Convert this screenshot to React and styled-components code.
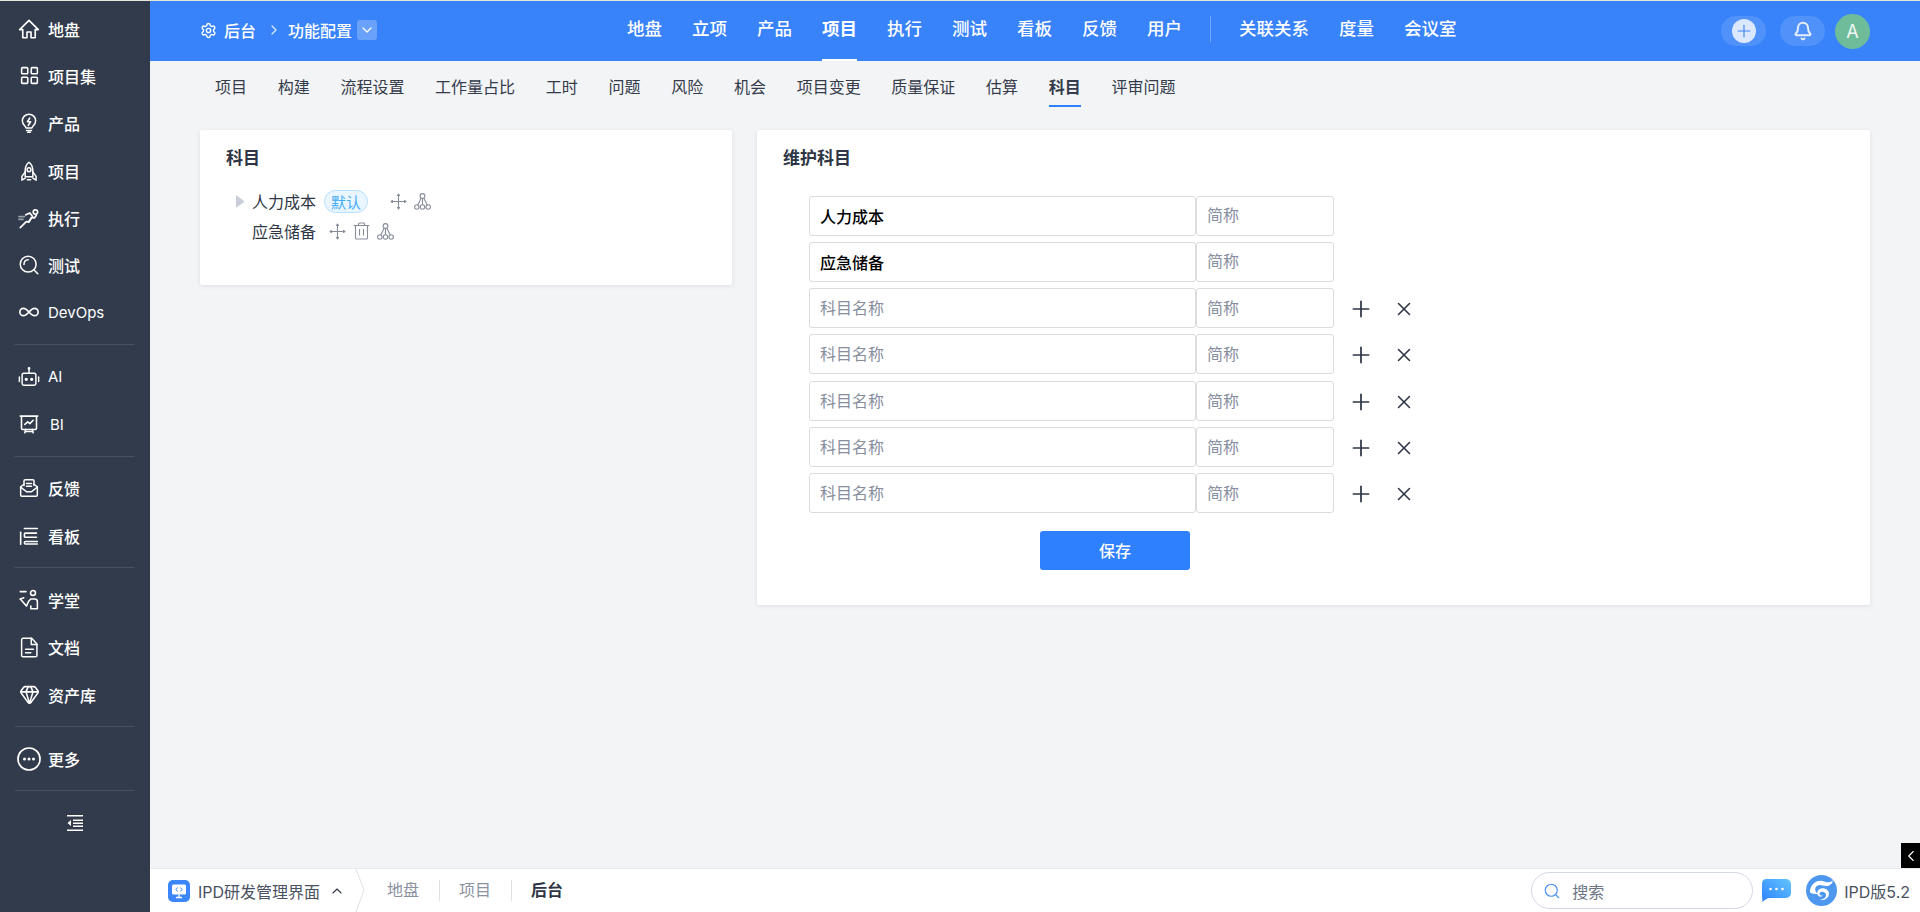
import React from "react";
import styled, { createGlobalStyle } from "styled-components";
import { Plus, X, Bell, Search, Settings, ChevronRight, ChevronDown, ChevronUp, ChevronLeft, LayoutGrid, Infinity as InfinityIcon, Gem } from "lucide-react";

const FONT = `Inter, "Noto Sans CJK SC", sans-serif`;

const GlobalStyle = createGlobalStyle`
  html, body { margin: 0; padding: 0; height: 100%; }
  body { font-family: ${FONT}; background: #f3f4f6; overflow: hidden; }
  * { box-sizing: border-box; }
`;

const Page = styled.div`
  position: relative;
  display: flex;
  height: 912px;
  width: 1920px;
  border-top: 1px solid #e6e6da;
`;

/* ---------- sidebar ---------- */
const Sidebar = styled.aside`
  width: 150px;
  flex: none;
  background: #313b4c;
  padding-top: 4px;
  display: flex;
  flex-direction: column;
`;
const SideItem = styled.div`
  height: 47.3px;
  flex: none;
  display: flex;
  align-items: center;
  padding-left: ${(p) => p.$pad || 19}px;
  gap: ${(p) => p.$gap || 9}px;
  color: #fff;
  font-size: 16px;
  font-weight: 500;
  svg { flex: none; }
`;
const SideLatin = styled.span`
  font-size: 15px;
  font-weight: 400;
`;
const SideDivider = styled.div`
  height: 1px;
  flex: none;
  margin: 8px 15px;
  background: #49515f;
`;
const Collapse = styled.div`
  height: 47.3px;
  flex: none;
  display: flex;
  align-items: center;
  justify-content: center;
  color: #fff;
`;

const Line = ({ size = 20, children, fill = "none", width = 1.8 }) => (
  <svg width={size} height={size} viewBox="0 0 24 24" fill={fill} stroke="currentColor" strokeWidth={width} strokeLinecap="round" strokeLinejoin="round">
    {children}
  </svg>
);

const HomeIcon = () => (
  <Line size={22}><path d="M12 2.5 1.8 12.6h3.4V21.5h4.6v-6.2h4.4v6.2h4.6V12.6h3.4z" /></Line>
);
const BulbIcon = () => (
  <Line><path d="M8.5 18c0-2-4.5-3.6-4.5-8.6a8 8 0 0 1 16 0c0 5-4.5 6.6-4.5 8.6z" /><path d="M13 6l-3 4.5h4L11 15" /><path d="M9 21h6M10.5 23.2h3" /></Line>
);
const RocketIcon = () => (
  <Line>
    <path d="M12 1.5c3.2 2.6 4.6 6 4.6 10V19H7.4v-7.5C7.4 7.5 8.8 4.1 12 1.5z" />
    <path d="M7.4 13 3.5 18.5V23l3.9-2.5M16.6 13l3.9 5.5V23l-3.9-2.5" />
    <circle cx="12" cy="10.5" r="2.3" />
    <path d="M10 22.5h4" />
  </Line>
);
const RunnerIcon = () => (
  <Line size={22}>
    <circle cx="19" cy="5.5" r="2.4" />
    <path d="M2.5 22.5 9 16l3 .5 2.5-5 3.5.5 2-3" />
    <path d="M8.5 8.5 13 6.5l3 4-4 5" />
    <path d="M1 10.5h6M1 13.5h4.500" opacity="0.5" />
  </Line>
);
const TestIcon = () => (
  <Line>
    <circle cx="11" cy="11" r="9.5" />
    <path d="M17.8 17.8 22.5 22.5M6 11.5c0-3 2-5.500 5-5.700" />
  </Line>
);
const BotIcon = () => (
  <Line size={22} width={1.6}>
    <rect x="4.5" y="8" width="15" height="13" rx="1.8" />
    <path d="M12 8V3.5M1.5 12v5M22.500 12v5" />
    <circle cx="12" cy="2.7" r="0.7" fill="currentColor" />
    <circle cx="9" cy="14.5" r="1" fill="currentColor" />
    <circle cx="15" cy="14.5" r="1" fill="currentColor" />
  </Line>
);
const BoardIcon = () => (
  <Line width={1.9}>
    <path d="M1.5 2.5h21M3 2.5V17a1.5 1.5 0 0 0 1.5 1.500h15A1.500 1.500 0 0 0 21 17V2.500" />
    <path d="M7 12.500l3.500-3 2.500 2 4-4M8 18.500l-1 4M16 18.500l1 4M7.500 21h9" />
  </Line>
);
const FeedbackIcon = () => (
  <Line>
    <path d="M6 9V3.500A1.500 1.500 0 0 1 7.500 2h9A1.500 1.500 0 0 1 18 3.500V9" />
    <path d="M9 6.500h6M9 10h6" />
    <path d="M6 7.500 2 10.500v10A1.500 1.500 0 0 0 3.500 22h17a1.500 1.500 0 0 0 1.500-1.500v-10l-4-3" />
    <path d="M2 11l7 5.500h6L22 11" />
  </Line>
);
const KanbanIcon = () => (
  <Line width={1.9}>
    <path d="M22 3H6.500" />
    <path d="M21 8.500H7.500a1 1 0 0 0-1 1v3a1 1 0 0 0 1 1H21" />
    <path d="M22 18.500H7.500a1 1 0 0 0-1 1v1a1 1 0 0 0 1 1H22" />
    <path d="M2 7.500V22" />
  </Line>
);
const StudyIcon = () => (
  <Line size={21} width={1.8}>
    <circle cx="16" cy="4.500" r="2.800" />
    <path d="M1.500 3h6.500M1.500 11.500l7 8 2.500-5.500 2.500-2.500h4.500a3 3 0 0 1 3 3V22.500h-7.500v-3" />
    <path d="M5.500 10 1.500 11.500" />
  </Line>
);
const DocIcon = () => (
  <Line size={21} width={1.7}>
    <path d="M4.500 1.500h10l6 6.500v13a1.500 1.500 0 0 1-1.500 1.500H4.500A1.500 1.500 0 0 1 3 21V3a1.500 1.500 0 0 1 1.500-1.500z" />
    <path d="M14 1.500V8.500h6.500M7.500 14h9M7.500 18h6" />
  </Line>
);
const MoreIcon = () => (
  <svg width="24" height="24" viewBox="0 0 24 24" fill="none" stroke="currentColor" strokeWidth="1.7">
    <circle cx="12" cy="12" r="11" />
    <circle cx="7.5" cy="12" r="1.5" fill="currentColor" stroke="none" />
    <circle cx="12" cy="12" r="1.5" fill="currentColor" stroke="none" />
    <circle cx="16.5" cy="12" r="1.5" fill="currentColor" stroke="none" />
  </svg>
);
const OutdentIcon = () => (
  <svg width="16" height="16" viewBox="0 0 16 16" fill="currentColor">
    <path d="M0 0h16v1.500H0zM6 4.500h10V6H6zM6 7.500h10V9H6zM6 10.500h10V12H6zM0 14.500h16V16H0zM4 5v6L0.500 8z" />
  </svg>
);

const sideGroups = [
  [
    ["地盘", <HomeIcon />, { $pad: 18, $gap: 8 }],
    ["项目集", <LayoutGrid size={21} strokeWidth={1.8} />, { $gap: 8 }],
    ["产品", <BulbIcon />],
    ["项目", <RocketIcon />],
    ["执行", <RunnerIcon />, { $pad: 18, $gap: 8 }],
    ["测试", <TestIcon />],
    ["DevOps", <InfinityIcon size={22} strokeWidth={1.8} />, { $pad: 18, $gap: 8, latin: true }],
  ],
  [
    ["AI", <BotIcon />, { $pad: 18, $gap: 8, latin: true }],
    ["BI", <BoardIcon />, { $gap: 11, latin: true }],
  ],
  [
    ["反馈", <FeedbackIcon />],
    ["看板", <KanbanIcon />],
  ],
  [
    ["学堂", <StudyIcon />, { $pad: 19, $gap: 8 }],
    ["文档", <DocIcon />, { $pad: 19, $gap: 8 }],
    ["资产库", <Gem size={21} strokeWidth={1.8} />, { $pad: 19, $gap: 8 }],
  ],
  [["更多", <MoreIcon />, { $pad: 17, $gap: 7 }]],
];

/* ---------- top bar ---------- */
const Main = styled.div`
  flex: 1;
  min-width: 0;
  display: flex;
  flex-direction: column;
`;
const TopBar = styled.header`
  height: 60px;
  flex: none;
  background: #3883fa;
  color: #fff;
  display: flex;
  align-items: stretch;
  padding-right: 50px;
`;
const Crumbs = styled.div`
  width: 477px;
  flex: none;
  display: flex;
  align-items: center;
  padding: 0 0 2px 50px;
  font-size: 16px;
  font-weight: 500;
  color: #fff;
`;
const CrumbText = styled.span`
  margin-left: ${(p) => p.$ml || 0}px;
`;
const CrumbArrow = styled.span`
  display: flex;
  margin: 0 6px 0 10px;
  opacity: 0.8;
`;
const DropBox = styled.span`
  width: 20px;
  height: 20px;
  margin-left: 5px;
  border-radius: 3px;
  background: rgba(255, 255, 255, 0.25);
  display: flex;
  align-items: center;
  justify-content: center;
`;
const TopNav = styled.nav`
  display: flex;
  align-items: stretch;
  gap: 30px;
`;
const TopLink = styled.a`
  height: 60px;
  display: flex;
  align-items: center;
  padding-bottom: 6px;
  font-size: 17.5px;
  font-weight: ${(p) => (p.$active ? 700 : 500)};
  color: #fff;
  border-bottom: 2px solid ${(p) => (p.$active ? "#fff" : "transparent")};
`;
const TopDivider = styled.span`
  width: 1px;
  height: 26px;
  align-self: center;
  margin: 0 -2px 4px -2px;
  background: rgba(255, 255, 255, 0.3);
`;
const TopActions = styled.div`
  margin-left: auto;
  display: flex;
  align-items: center;
  gap: 10px;
`;
const Pill = styled.span`
  width: 45px;
  height: 30px;
  border-radius: 15px;
  background: rgba(255, 255, 255, 0.12);
  margin-right: ${(p) => p.$mr || 0}px;
  display: flex;
  align-items: center;
  justify-content: center;
  color: #e6eeff;
`;
const PlusDot = styled.span`
  width: 24px;
  height: 24px;
  border-radius: 50%;
  background: #dce8ff;
  color: #3883fa;
  display: flex;
  align-items: center;
  justify-content: center;
`;
const Avatar = styled.span`
  width: 35px;
  height: 35px;
  border-radius: 50%;
  background: #6fbc9a;
  color: #f1f7f4;
  font-size: 18px;
  display: flex;
  align-items: center;
  justify-content: center;
`;

/* ---------- sub nav ---------- */
const SubNav = styled.nav`
  height: 54px;
  flex: none;
  display: flex;
  align-items: flex-start;
  gap: 30.7px;
  padding: 8px 0 0 65px;
`;
const SubLink = styled.a`
  height: 38px;
  display: flex;
  align-items: center;
  padding-bottom: 2px;
  font-size: 16px;
  color: #343b4a;
  font-weight: ${(p) => (p.$active ? 700 : 400)};
  border-bottom: 2px solid ${(p) => (p.$active ? "#2f80ff" : "transparent")};
`;

/* ---------- cards ---------- */
const Content = styled.main`
  flex: 1;
  min-height: 0;
  display: flex;
  align-items: flex-start;
  gap: 25px;
  padding: 15px 50px 0;
`;
const Card = styled.section`
  background: #fff;
  border-radius: 2px;
  box-shadow: 0 1px 4px rgba(30, 40, 60, 0.1);
  padding: 16px ${(p) => p.$pr || 26}px ${(p) => p.$pb}px;
  width: ${(p) => p.$w || "auto"};
  flex: ${(p) => (p.$w ? "none" : 1)};
`;
const CardTitle = styled.h2`
  margin: 0;
  font-size: 17px;
  line-height: 24px;
  font-weight: 700;
  color: #2e3645;
`;
const Tree = styled.div`
  margin: 16px 0 0 10px;
`;
const TreeRow = styled.div`
  height: 30px;
  display: flex;
  align-items: center;
  font-size: 16px;
  color: #2e3645;
`;
const Caret = styled.span`
  width: 8px;
  height: 13px;
  margin-right: 8px;
  flex: none;
  border-style: solid;
  border-width: 6.5px 0 6.5px 8px;
  border-color: transparent transparent transparent #c8cdd9;
  visibility: ${(p) => (p.$hidden ? "hidden" : "visible")};
`;
const Tag = styled.span`
  width: 44px;
  height: 23px;
  margin-left: 8px;
  border-radius: 12px;
  border: 1px solid #b6e0ff;
  background: #e9f6ff;
  color: #45abf6;
  font-size: 15px;
  display: flex;
  align-items: center;
  justify-content: center;
`;
const TreeTools = styled.span`
  display: flex;
  align-items: center;
  gap: 7px;
  margin-left: ${(p) => p.$ml}px;
  color: #878d9b;
`;

const MoveIcon = () => (
  <svg width="17" height="17" viewBox="0 0 17 17" fill="none" stroke="currentColor" strokeWidth="1.1" strokeLinejoin="round">
    <path d="M8.5 1v15M1 8.500h15" />
    <path d="M7.5 2.500 8.500 1 9.500 2.500zM7.500 14.500l1 1.500 1-1.500zM2.500 7.500 1 8.500l1.500 1zM14.500 7.500l1.500 1-1.500 1z" fill="currentColor" />
  </svg>
);
const TrashIcon = () => (
  <svg width="17" height="18" viewBox="0 0 17 18" fill="none" stroke="currentColor" strokeWidth="1.1">
    <path d="M.5 3.500h16M5.500 3.500V2a1 1 0 0 1 1-1h4a1 1 0 0 1 1 1v1.500M2.500 3.500V16a1 1 0 0 0 1 1h10a1 1 0 0 0 1-1V3.500M6.500 7v6.500M10.500 7v6.500" />
  </svg>
);
const NodesIcon = () => (
  <svg width="17" height="17" viewBox="0 0 17 17" fill="none" stroke="currentColor" strokeWidth="1.1">
    <circle cx="8.5" cy="3" r="2.4" />
    <circle cx="2.8" cy="14" r="2.2" />
    <circle cx="8.5" cy="14" r="2.2" />
    <circle cx="14.2" cy="14" r="2.2" />
    <path d="M8.5 5.400v6.400M7.200 5 3.800 12M9.800 5l3.400 7" />
  </svg>
);

/* ---------- form ---------- */
const Rows = styled.div`
  margin: 26px 0 0 26px;
  display: flex;
  flex-direction: column;
  gap: 6.17px;
`;
const Row = styled.div`
  height: 40px;
  display: flex;
  align-items: center;
`;
const Field = styled.input`
  width: ${(p) => p.$w}px;
  height: 40px;
  flex: none;
  border: 1px solid #dcdcdc;
  border-radius: 3px;
  padding: 0 10px ${(p) => p.$lift || 0}px;
  outline: none;
  background: #fff;
  font-family: ${FONT};
  font-size: 16px;
  font-weight: 500;
  color: #000;
  &::placeholder {
    color: #878e9e;
    font-weight: 400;
    opacity: 1;
  }
`;
const RowTool = styled.span`
  width: 26px;
  height: 26px;
  margin-left: ${(p) => p.$ml}px;
  margin-top: 2px;
  display: flex;
  align-items: center;
  justify-content: center;
  color: #2e3645;
`;
const SaveButton = styled.button`
  display: block;
  width: 150px;
  height: 39px;
  margin: 18px 0 0 257px;
  border: none;
  border-radius: 3px;
  background: #2f80ff;
  color: #fff;
  font-family: ${FONT};
  font-size: 16px;
  font-weight: 500;
`;

/* ---------- bottom bar ---------- */
const BottomBar = styled.footer`
  height: 44px;
  flex: none;
  background: #fff;
  border-top: 1px solid #e9eaee;
  display: flex;
  align-items: center;
`;
const AppMark = styled.span`
  width: 22px;
  height: 22px;
  margin-left: 18px;
  border-radius: 5px;
  background: #3b86fb;
  display: flex;
  align-items: center;
  justify-content: center;
`;
const AppName = styled.span`
  margin-left: 8px;
  font-size: 16px;
  color: #4a5161;
`;
const AppToggle = styled.span`
  display: flex;
  margin-left: 9px;
  color: #2e3645;
`;
const BreadArrow = styled.svg`
  margin-left: 10px;
  flex: none;
`;
const BottomTabs = styled.div`
  display: flex;
  align-items: center;
  margin-left: 22px;
`;
const BottomTab = styled.span`
  font-size: 16px;
  padding-right: 19.5px;
  margin-right: 19.5px;
  color: ${(p) => (p.$active ? "#2e3645" : "#8a919f")};
  font-weight: ${(p) => (p.$active ? 700 : 400)};
  border-right: ${(p) => (p.$active ? "none" : "1px solid #dfe1e6")};
  line-height: 21px;
`;
const BottomRight = styled.div`
  margin-left: auto;
  display: flex;
  align-items: center;
  padding-right: 10px;
`;
const SearchBox = styled.div`
  width: 222px;
  height: 37px;
  border: 1px solid #d3d8e6;
  border-radius: 19px;
  display: flex;
  align-items: center;
  padding-left: 11px;
  gap: 11px;
  color: #4a8ff0;
`;
const SearchText = styled.span`
  font-size: 16px;
  color: #6d7686;
`;
const ChatMark = styled.svg`
  margin-left: 8px;
  flex: none;
`;
const BrandMark = styled.svg`
  margin-left: 15px;
  flex: none;
`;
const Version = styled.span`
  margin-left: 7px;
  font-size: 16px;
  color: #4a5161;
`;
const EdgeTab = styled.div`
  position: absolute;
  right: 0;
  top: 842px;
  width: 19px;
  height: 25px;
  background: #000;
  color: #fff;
  display: flex;
  align-items: center;
  justify-content: center;
`;

const topLinks = ["地盘", "立项", "产品", "项目", "执行", "测试", "看板", "反馈", "用户"];
const topExtra = ["关联关系", "度量", "会议室"];
const subLinks = ["项目", "构建", "流程设置", "工作量占比", "工时", "问题", "风险", "机会", "项目变更", "质量保证", "估算", "科目", "评审问题"];

export default function App() {
  return (
    <>
      <GlobalStyle />
      <Page>
        <Sidebar>
          {sideGroups.map((group, i) => (
            <React.Fragment key={i}>
              {i > 0 && <SideDivider />}
              {group.map(([label, icon, opts = {}]) => (
                <SideItem key={label} $pad={opts.$pad} $gap={opts.$gap}>
                  {icon}
                  {opts.latin ? <SideLatin>{label}</SideLatin> : <span>{label}</span>}
                </SideItem>
              ))}
            </React.Fragment>
          ))}
          <SideDivider />
          <Collapse><OutdentIcon /></Collapse>
        </Sidebar>

        <Main>
          <TopBar>
            <Crumbs>
              <Settings size={17} strokeWidth={2} />
              <CrumbText $ml={7}>后台</CrumbText>
              <CrumbArrow><ChevronRight size={16} strokeWidth={2} /></CrumbArrow>
              <CrumbText>功能配置</CrumbText>
              <DropBox><ChevronDown size={16} strokeWidth={1.8} /></DropBox>
            </Crumbs>
            <TopNav>
              {topLinks.map((t) => (
                <TopLink key={t} $active={t === "项目"}>{t}</TopLink>
              ))}
              <TopDivider />
              {topExtra.map((t) => (
                <TopLink key={t}>{t}</TopLink>
              ))}
            </TopNav>
            <TopActions>
              <Pill $mr={4}><PlusDot><Plus size={20} strokeWidth={1.3} /></PlusDot></Pill>
              <Pill><Bell size={20} strokeWidth={2.4} /></Pill>
              <Avatar>A</Avatar>
            </TopActions>
          </TopBar>

          <SubNav>
            {subLinks.map((t) => (
              <SubLink key={t} $active={t === "科目"}>{t}</SubLink>
            ))}
          </SubNav>

          <Content>
            <Card $w="532px" $pb={39}>
              <CardTitle>科目</CardTitle>
              <Tree>
                <TreeRow>
                  <Caret />
                  人力成本
                  <Tag>默认</Tag>
                  <TreeTools $ml={22}><MoveIcon /><NodesIcon /></TreeTools>
                </TreeRow>
                <TreeRow>
                  <Caret $hidden />
                  应急储备
                  <TreeTools $ml={13}><MoveIcon /><TrashIcon /><NodesIcon /></TreeTools>
                </TreeRow>
              </Tree>
            </Card>

            <Card $pb={35}>
              <CardTitle>维护科目</CardTitle>
              <Rows>
                {["人力成本", "应急储备", "", "", "", "", ""].map((name, i) => (
                  <Row key={i}>
                    <Field $w={387} readOnly value={name} placeholder="科目名称" />
                    <Field $w={138} $lift={name ? 3 : 0} readOnly placeholder="简称" />
                    {!name && (
                      <>
                        <RowTool $ml={14}><Plus size={26} strokeWidth={1.6} /></RowTool>
                        <RowTool $ml={17}><X size={22} strokeWidth={1.7} /></RowTool>
                      </>
                    )}
                  </Row>
                ))}
              </Rows>
              <SaveButton>保存</SaveButton>
            </Card>
          </Content>

          <BottomBar>
            <AppMark>
              <svg width="16" height="16" viewBox="0 0 16 16" fill="none">
                <rect x="1" y="1.5" width="14" height="10" rx="1.5" fill="#fff" />
                <path d="M6.5 4.500 5 6.500l1.500 2M9.500 4.500 11 6.500l-1.500 2" stroke="#3b86fb" strokeWidth="1" />
                <path d="M8 11.500V14.500M5 14.500h6" stroke="#fff" strokeWidth="1.3" />
              </svg>
            </AppMark>
            <AppName>IPD研发管理界面</AppName>
            <AppToggle><ChevronUp size={16} strokeWidth={1.6} /></AppToggle>
            <BreadArrow width="10" height="43" viewBox="0 0 10 43" fill="none" stroke="#dfe1e6">
              <path d="M1 0 9 21 1 43" />
            </BreadArrow>
            <BottomTabs>
              <BottomTab>地盘</BottomTab>
              <BottomTab>项目</BottomTab>
              <BottomTab $active>后台</BottomTab>
            </BottomTabs>
            <BottomRight>
              <SearchBox>
                <Search size={18} strokeWidth={1.5} />
                <SearchText>搜索</SearchText>
              </SearchBox>
              <ChatMark width="30" height="24" viewBox="0 0 30 24">
                <defs>
                  <linearGradient id="chatFill" x1="0" y1="1" x2="1" y2="0">
                    <stop offset="0" stopColor="#2f80ff" />
                    <stop offset="1" stopColor="#62c6ff" />
                  </linearGradient>
                </defs>
                <path d="M5 0h20a5 5 0 0 1 5 5v9a5 5 0 0 1-5 5H9c-3 0-5 2-8 4 1-2 0-4 0-6V5a5 5 0 0 1 4-5z" fill="url(#chatFill)" />
                <circle cx="9.5" cy="10" r="1.3" fill="#fff" />
                <circle cx="15.5" cy="10" r="1.3" fill="#fff" />
                <circle cx="21.5" cy="10" r="1.3" fill="#fff" />
              </ChatMark>
              <BrandMark width="31" height="31" viewBox="0 0 31 31">
                <circle cx="15.5" cy="15.5" r="15.5" fill="#4d97ef" />
                <path d="M4 17c0-7 6-12 12-11 3 .5 5 2 8 1 1.500-.5 2.500-1 3-2-.5 4-3.500 6-7 6-3.500 0-6-2-9 0-3 2-2 6 1 8-4 0-8-.5-8-2z" fill="#fff" />
                <path d="M11 18c.5-3.500 4-5.500 7.500-4.500 3.500 1 5.500 4 4 7.500-1.200 3-5 5-8.500 3.500 3 0 6-1.500 6-4.500 0-2.500-2.500-4-5-3-1.500.5-2 2-1 3 .7.7 2 .7 2.500 0-.2 1.500-1.800 2-3 1.500-1.500-.7-2.700-2-2.500-3.500z" fill="#fff" />
              </BrandMark>
              <Version>IPD版5.2</Version>
            </BottomRight>
          </BottomBar>
        </Main>
        <EdgeTab><ChevronLeft size={18} strokeWidth={1.5} /></EdgeTab>
      </Page>
    </>
  );
}
